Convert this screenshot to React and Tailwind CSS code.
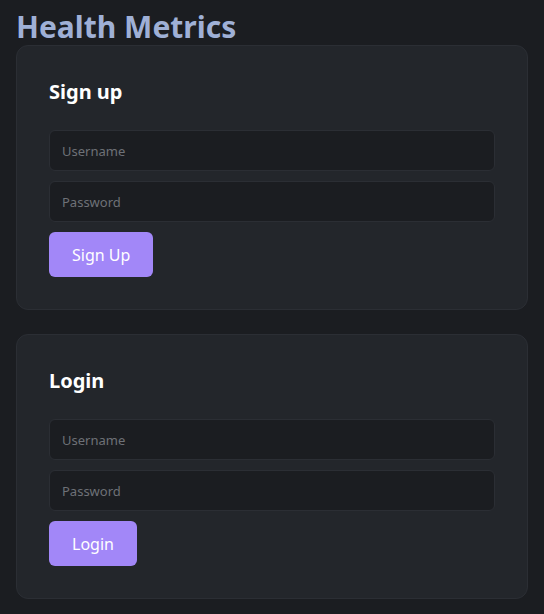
import React, { useState } from 'react';

function AuthCard({ title, buttonLabel }) {
  const [username, setUsername] = useState('');
  const [password, setPassword] = useState('');

  return (
    <div className="rounded-xl border border-[#2b2e34] bg-[#23262b] px-8 pt-8 pb-8">
      <h2 className="text-[20px] font-bold leading-[28px] text-white mb-6">{title}</h2>
      <div className="flex flex-col gap-[10px]">
        <input
          value={username}
          onChange={(e) => setUsername(e.target.value)}
          placeholder="Username"
          className="h-[41px] w-full rounded-md border border-[#2b2e34] bg-[#1b1d21] px-3 text-[13px] text-gray-200 placeholder:text-[#6e7177] outline-none"
        />
        <input
          type="password"
          value={password}
          onChange={(e) => setPassword(e.target.value)}
          placeholder="Password"
          className="h-[41px] w-full rounded-md border border-[#2b2e34] bg-[#1b1d21] px-3 text-[13px] text-gray-200 placeholder:text-[#6e7177] outline-none"
        />
        <div>
          <button className="h-[45px] rounded-md bg-[#a287f8] px-[23px] text-[16px] text-white">
            {buttonLabel}
          </button>
        </div>
      </div>
    </div>
  );
}

export default function App() {
  return (
    <div className="min-h-[614px] bg-[#1b1d21] px-4 font-['Noto_Sans',sans-serif]">
      <h1 className="h-[45px] pt-[10px] text-[30px] font-bold leading-[34px] text-[#9fb0d6]">
        Health Metrics
      </h1>
      <div className="flex flex-col gap-6">
        <AuthCard title="Sign up" buttonLabel="Sign Up" />
        <AuthCard title="Login" buttonLabel="Login" />
      </div>
    </div>
  );
}
